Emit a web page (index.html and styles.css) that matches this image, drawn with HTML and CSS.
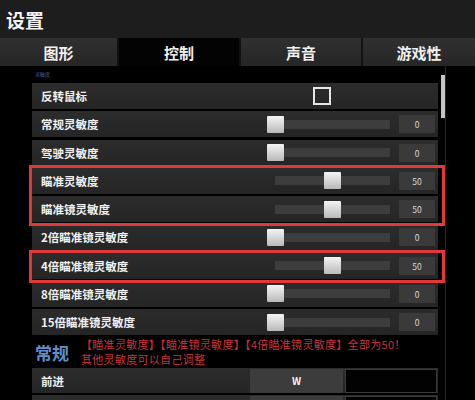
FILE: index.html
```html
<!DOCTYPE html>
<html lang="zh-CN">
<head>
  <meta charset="UTF-8" />
  <title>设置</title>
  <link rel="stylesheet" href="styles.css">
</head>
<body>

  <header class="topbar">
    <h1>设置</h1>
  </header>

  <nav class="tabs">
    <a class="tab">图形</a>
    <a class="tab active">控制</a>
    <a class="tab">声音</a>
    <a class="tab">游戏性</a>
  </nav>

  <main class="main">
    <div class="list">
      <div class="cut">灵敏度</div>

      <div class="rows">
        <div class="row">
          <span class="label">反转鼠标</span>
          <span class="check"></span>
        </div>
        <div class="row">
          <span class="label">常规灵敏度</span>
          <div class="slider"><span class="thumb" style="left:0%"></span></div>
          <span class="val">0</span>
        </div>
        <div class="row">
          <span class="label">驾驶灵敏度</span>
          <div class="slider"><span class="thumb" style="left:0%"></span></div>
          <span class="val">0</span>
        </div>

        <div class="mark">
          <div class="row">
            <span class="label">瞄准灵敏度</span>
            <div class="slider"><span class="thumb" style="left:50%"></span></div>
            <span class="val">50</span>
          </div>
          <div class="row">
            <span class="label">瞄准镜灵敏度</span>
            <div class="slider"><span class="thumb" style="left:50%"></span></div>
            <span class="val">50</span>
          </div>
        </div>

        <div class="row">
          <span class="label">2倍瞄准镜灵敏度</span>
          <div class="slider"><span class="thumb" style="left:0%"></span></div>
          <span class="val">0</span>
        </div>

        <div class="mark">
          <div class="row">
            <span class="label">4倍瞄准镜灵敏度</span>
            <div class="slider"><span class="thumb" style="left:50%"></span></div>
            <span class="val">50</span>
          </div>
        </div>

        <div class="row">
          <span class="label">8倍瞄准镜灵敏度</span>
          <div class="slider"><span class="thumb" style="left:0%"></span></div>
          <span class="val">0</span>
        </div>
        <div class="row">
          <span class="label">15倍瞄准镜灵敏度</span>
          <div class="slider"><span class="thumb" style="left:0%"></span></div>
          <span class="val">0</span>
        </div>
      </div>

      <div class="group">
        <h2>常规</h2>
        <p class="note">【瞄准灵敏度】【瞄准镜灵敏度】【4倍瞄准镜灵敏度】全部为50！<br>其他灵敏度可以自己调整</p>
      </div>

      <div class="rows">
        <div class="row keyrow">
          <span class="label">前进</span>
          <span class="key">W</span>
          <span class="key empty"></span>
        </div>
        <div class="row keyrow">
          <span class="label"></span>
          <span class="key"></span>
          <span class="key empty"></span>
        </div>
      </div>
    </div>

    <div class="scroll"><span class="scroll-thumb"></span></div>
  </main>

</body>
</html>
```

FILE: styles.css
```css
body {
  margin: 0;
  width: 475px;
  height: 400px;
  overflow: hidden;
  background: #000;
  color: #eee;
  font-family: "Noto Sans CJK SC", "Noto Sans", sans-serif;
}
.topbar {
  height: 38px;
  background: #1d1d1d;
  display: flex;
  align-items: center;
  padding-left: 6px;
}
.topbar h1 {
  margin: 0;
  font-size: 19px;
  font-weight: 700;
  color: #f2f2f2;
}
.tabs {
  display: grid;
  grid-template-columns: 117px 120px 120px 1fr;
  gap: 2px;
  height: 28px;
  background: #111;
}
.tab {
  display: flex;
  align-items: center;
  justify-content: center;
  font-size: 15px;
  font-weight: 700;
  color: #f0f0f0;
  background: linear-gradient(#303030, #262626);
}
.tab.active {
  background: #030303;
}
.main {
  display: flex;
}
.list {
  width: 406px;
  padding-left: 32px;
}
.cut {
  height: 11px;
  padding: 5px 0 0 3px;
  margin-bottom: 1px;
  font-size: 5px;
  line-height: 6px;
  color: #4f6aa8;
}
.rows {
  display: flex;
  flex-direction: column;
  gap: 2.25px;
}
.mark {
  position: relative;
  display: flex;
  flex-direction: column;
  gap: 2.25px;
}
.mark::after {
  content: "";
  position: absolute;
  top: -3px;
  left: -3px;
  right: -7px;
  bottom: -4px;
  border: 3px solid #e0393b;
  pointer-events: none;
}
.row {
  height: 26px;
  display: grid;
  grid-template-columns: 1fr 115px 36px;
  column-gap: 9px;
  align-items: center;
  padding: 0 3px 0 9px;
  background: linear-gradient(#2c2c2c, #252525);
}
.label {
  font-size: 11.5px;
  font-weight: 700;
  color: #f0f0f0;
  white-space: nowrap;
}
.check {
  grid-column: 2 / 4;
  width: 14px;
  height: 14px;
  border: 2px solid #e6e6e6;
  margin-left: 38px;
}
.slider {
  position: relative;
  height: 9px;
  background: #3d3d3d;
}
.thumb {
  position: absolute;
  top: -4px;
  width: 17px;
  height: 17px;
  margin-left: -8.5px;
  background: linear-gradient(#f4f4f4, #b9b9b9);
  border-radius: 1px;
}
.val {
  height: 18px;
  background: #3a3a3a;
  font-size: 8.5px;
  line-height: 18px;
  text-align: center;
  color: #d8d8d8;
}
.group {
  display: flex;
  align-items: center;
  gap: 12px;
  height: 32px;
  margin-top: 1px;
  padding-left: 3px;
}
.group h2 {
  margin: 0;
  font-size: 17px;
  font-weight: 700;
  color: #5f8fcb;
}
.note {
  margin: 0;
  font-size: 11px;
  line-height: 15px;
  letter-spacing: 0.3px;
  color: #c9333a;
  white-space: nowrap;
}
.keyrow {
  height: 25px;
  grid-template-columns: 1fr 93px 92px;
  column-gap: 2px;
  padding-right: 1px;
}
.key {
  height: 24px;
  background: #3c3c3c;
  font-size: 10px;
  font-weight: 700;
  line-height: 24px;
  text-align: center;
  color: #f2f2f2;
}
.key.empty {
  height: 22px;
  background: #020202;
  border: 1px solid #3a3a3a;
}
.scroll {
  width: 4px;
  margin-left: 3px;
  padding-top: 9px;
  border-right: 1px solid #262626;
}
.scroll-thumb {
  display: block;
  width: 4px;
  height: 43px;
  background: #c4c4c4;
}
```
